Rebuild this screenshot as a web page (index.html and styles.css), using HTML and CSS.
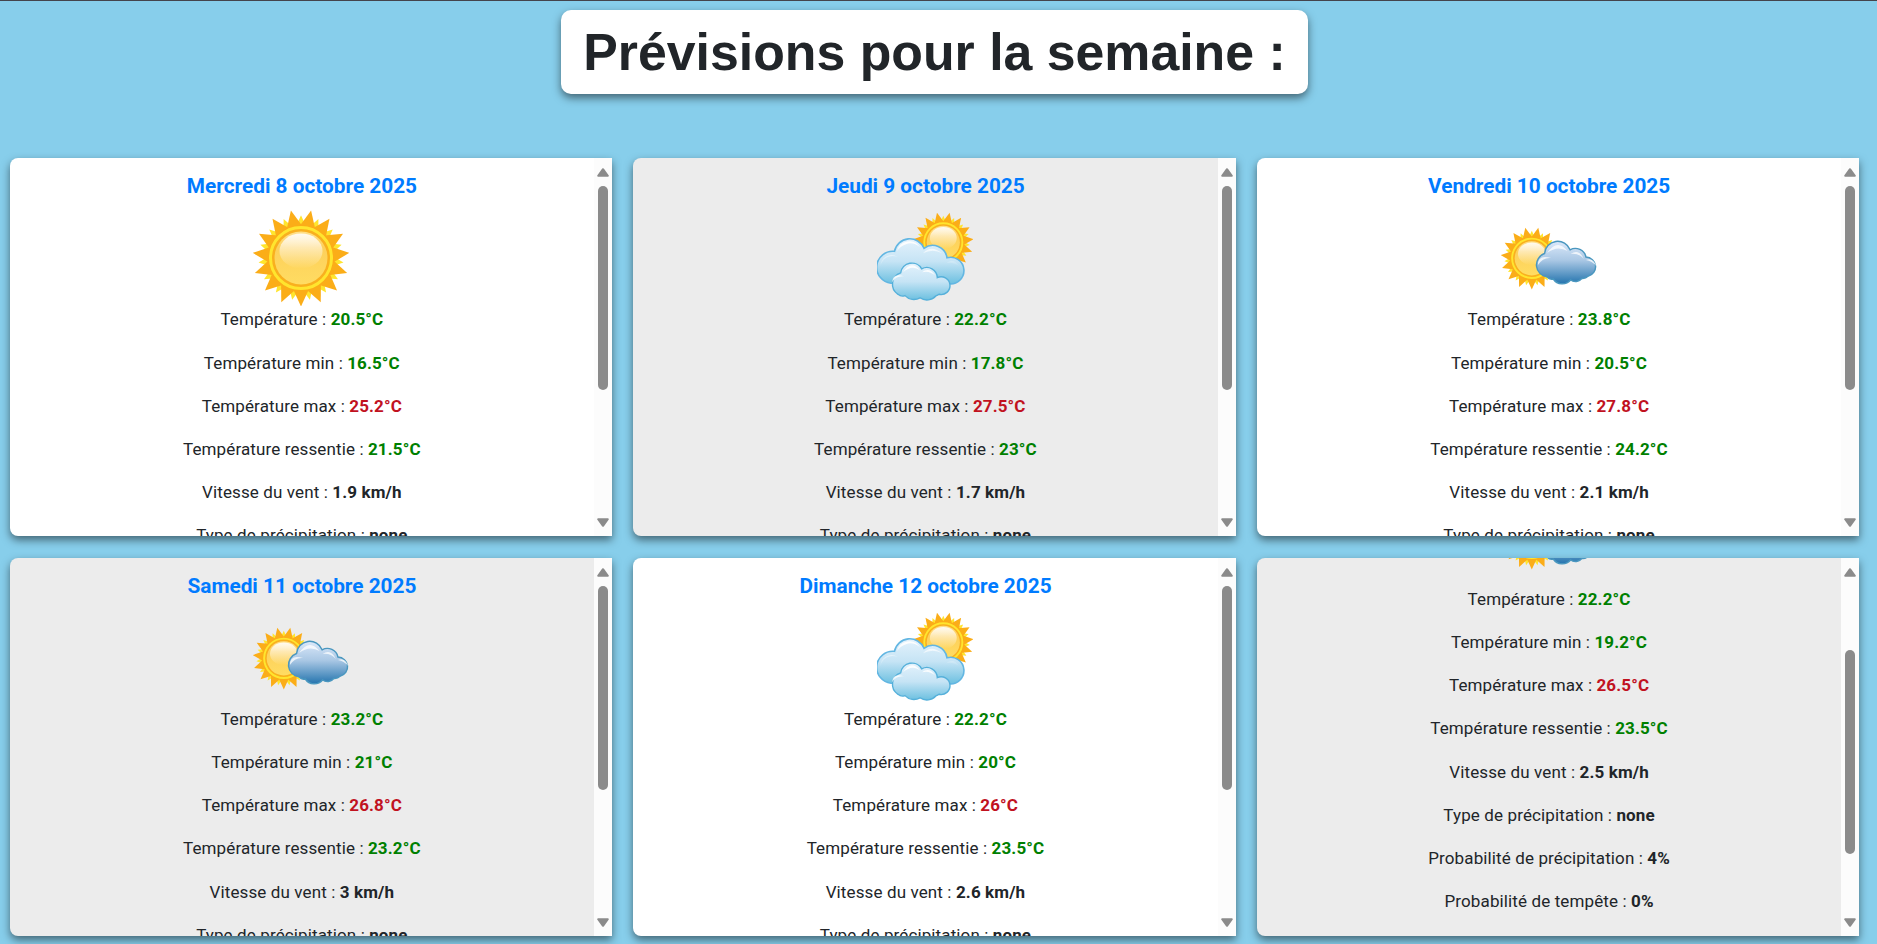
FILE: index.html
```html
<!DOCTYPE html>
<html lang="fr">
<head>
<meta charset="utf-8">
<title>Prévisions pour la semaine</title>
<link rel="stylesheet" href="styles.css">
</head>
<body>
<svg class="defs" aria-hidden="true">
  <defs>
    <linearGradient id="ball" x1="0" y1="0" x2="0" y2="1"><stop offset="0" stop-color="#ffe08a"/><stop offset=".3" stop-color="#fdd05a"/><stop offset="1" stop-color="#ffdc62"/></linearGradient>
    <linearGradient id="shine" x1="0" y1="0" x2="0" y2="1"><stop offset="0" stop-color="#fffaf0"/><stop offset="1" stop-color="#fffaf0" stop-opacity="0"/></linearGradient>
    <linearGradient id="light" x1="0" y1="0" x2="0" y2="1"><stop offset="0" stop-color="#e4f2fc"/><stop offset=".5" stop-color="#c6e4f5"/><stop offset="1" stop-color="#6cc0e0"/></linearGradient>
    <linearGradient id="dark" x1="0" y1="0" x2="0" y2="1"><stop offset="0" stop-color="#dce9fa"/><stop offset=".45" stop-color="#a9c7e4"/><stop offset="1" stop-color="#2474ae"/></linearGradient>
    <linearGradient id="gloss" x1="0" y1="0" x2="0" y2="1"><stop offset="0" stop-color="#fff"/><stop offset="1" stop-color="#fff" stop-opacity="0"/></linearGradient>
    <path id="ray" d="M-8 31L0 48.500L8 31Z"/>
    <g id="rays3"><use href="#ray"/><use href="#ray" transform="rotate(24)"/><use href="#ray" transform="rotate(48)"/></g>
    <g id="rays"><use href="#rays3"/><use href="#rays3" transform="rotate(72)"/><use href="#rays3" transform="rotate(144)"/><use href="#rays3" transform="rotate(216)"/><use href="#rays3" transform="rotate(288)"/></g>
    <g id="sun">
      <use href="#rays" fill="#ffe52e" transform="rotate(12) scale(.88)"/>
      <use href="#rays" fill="#fbad18"/>
      <circle r="32.5" fill="#fbad18"/>
      <circle r="30.5" fill="#f9b01e" stroke="#ffe52e" stroke-width="3"/>
      <circle r="26.5" fill="url(#ball)"/>
      <ellipse cy="-7" rx="21.5" ry="17.5" fill="url(#shine)"/>
    </g>
    <symbol id="sunny" viewBox="0 0 96 96"><use href="#sun" transform="translate(48 48)"/></symbol>
    <symbol id="cloudy" viewBox="0 0 96 96">
      <use href="#sun" transform="translate(66.3 32.3) scale(.625)"/>
      <g transform="translate(0 -.7)">
      <path d="M14 74A16 16 0 0 1 17.5 42A15.5 15.5 0 0 1 47 39A14.5 14.5 0 0 1 70 48.5A13.3 13.3 0 1 1 72 74.500Z" fill="url(#light)" stroke="#62b6e2" stroke-width="1.6"/>
      <path d="M3.500 58A11 11 0 0 1 21 48A12 12 0 0 0 3.500 58ZM20 42A12.500 12.500 0 0 1 43 38Q36 32 29 35Q23 37 20 42ZM46 44Q54 35 65 44Q56 39 46 44ZM69 54Q77 48 82 57Q76 52 69 54Z" fill="url(#gloss)"/>
      <path d="M21 85A12 12 0 0 1 23.700 63.500A11.300 11.300 0 0 1 44.700 59.500A10.500 10.500 0 0 1 60.300 68.300A8.900 8.900 0 1 1 62 85A9 9 0 0 1 59 86.500A12 12 0 0 1 43 88.500A12 12 0 0 1 28 86.300A7 7 0 0 1 21 85Z" fill="url(#light)" stroke="#55b0da" stroke-width="1.400"/>
      <path d="M15 73Q16 63 27 67Q19 66 15 73ZM26 63Q34 50 43 61Q35 55 26 63ZM45 63Q52 57 58 66Q52 61 45 63Z" fill="#fff" opacity=".85"/>
      </g>
    </symbol>
    <symbol id="partly" viewBox="0 0 96 96">
      <use href="#sun" transform="translate(30.800 48.300) scale(.645)"/>
      <g transform="translate(-.9 0) scale(1.022 1)">
      <path d="M46 67A12.200 12.200 0 0 1 43.500 43.500A12.900 12.900 0 0 1 68.500 39.800A10.600 10.600 0 0 1 84 47A9.800 9.800 0 0 1 86 66.300A7 7 0 0 1 80 68.500A8 8 0 0 1 69 70A10.500 10.500 0 0 1 52 69A6 6 0 0 1 46 67Z" fill="url(#dark)" stroke="#4a97bf" stroke-width="1.400"/>
      <path d="M37 55Q37 44 50 48Q42 47 37 55ZM46 43Q56 28 66 41Q56 35 46 43ZM69 44Q77 38 82 49Q77 43 69 44ZM84 50Q91 47 94 56Q90 51 84 50Z" fill="#fff" opacity=".75"/>
      </g>
    </symbol>
    <symbol id="arrow" viewBox="0 0 12 9"><path d="M6 1.200L10.800 7.800H1.200Z" fill="#8b8b8b" stroke="#8b8b8b" stroke-width="2" stroke-linejoin="round"/></symbol>
  </defs>
</svg>
<header class="top"><h1 class="title">Prévisions pour la semaine :</h1></header>
<main class="week">
  <article class="card">
    <div class="body">
      <h2 class="day">Mercredi 8 octobre 2025</h2>
      <svg class="icon"><use href="#sunny"/></svg>
      <p>Température : <b class="ok">20.5°C</b></p>
      <p>Température min : <b class="ok">16.5°C</b></p>
      <p>Température max : <b class="hot">25.2°C</b></p>
      <p>Température ressentie : <b class="ok">21.5°C</b></p>
      <p>Vitesse du vent : <b>1.9 km/h</b></p>
      <p>Type de précipitation : <b>none</b></p>
    </div>
    <div class="bar"><svg class="arrow"><use href="#arrow"/></svg><div class="track"><div class="thumb"></div></div><svg class="arrow down"><use href="#arrow"/></svg></div>
  </article>
  <article class="card alt">
    <div class="body">
      <h2 class="day">Jeudi 9 octobre 2025</h2>
      <svg class="icon"><use href="#cloudy"/></svg>
      <p>Température : <b class="ok">22.2°C</b></p>
      <p>Température min : <b class="ok">17.8°C</b></p>
      <p>Température max : <b class="hot">27.5°C</b></p>
      <p>Température ressentie : <b class="ok">23°C</b></p>
      <p>Vitesse du vent : <b>1.7 km/h</b></p>
      <p>Type de précipitation : <b>none</b></p>
    </div>
    <div class="bar"><svg class="arrow"><use href="#arrow"/></svg><div class="track"><div class="thumb"></div></div><svg class="arrow down"><use href="#arrow"/></svg></div>
  </article>
  <article class="card">
    <div class="body">
      <h2 class="day">Vendredi 10 octobre 2025</h2>
      <svg class="icon"><use href="#partly"/></svg>
      <p>Température : <b class="ok">23.8°C</b></p>
      <p>Température min : <b class="ok">20.5°C</b></p>
      <p>Température max : <b class="hot">27.8°C</b></p>
      <p>Température ressentie : <b class="ok">24.2°C</b></p>
      <p>Vitesse du vent : <b>2.1 km/h</b></p>
      <p>Type de précipitation : <b>none</b></p>
    </div>
    <div class="bar"><svg class="arrow"><use href="#arrow"/></svg><div class="track"><div class="thumb"></div></div><svg class="arrow down"><use href="#arrow"/></svg></div>
  </article>
  <article class="card alt">
    <div class="body">
      <h2 class="day">Samedi 11 octobre 2025</h2>
      <svg class="icon"><use href="#partly"/></svg>
      <p>Température : <b class="ok">23.2°C</b></p>
      <p>Température min : <b class="ok">21°C</b></p>
      <p>Température max : <b class="hot">26.8°C</b></p>
      <p>Température ressentie : <b class="ok">23.2°C</b></p>
      <p>Vitesse du vent : <b>3 km/h</b></p>
      <p>Type de précipitation : <b>none</b></p>
    </div>
    <div class="bar"><svg class="arrow"><use href="#arrow"/></svg><div class="track"><div class="thumb"></div></div><svg class="arrow down"><use href="#arrow"/></svg></div>
  </article>
  <article class="card">
    <div class="body">
      <h2 class="day">Dimanche 12 octobre 2025</h2>
      <svg class="icon"><use href="#cloudy"/></svg>
      <p>Température : <b class="ok">22.2°C</b></p>
      <p>Température min : <b class="ok">20°C</b></p>
      <p>Température max : <b class="hot">26°C</b></p>
      <p>Température ressentie : <b class="ok">23.5°C</b></p>
      <p>Vitesse du vent : <b>2.6 km/h</b></p>
      <p>Type de précipitation : <b>none</b></p>
    </div>
    <div class="bar"><svg class="arrow"><use href="#arrow"/></svg><div class="track"><div class="thumb"></div></div><svg class="arrow down"><use href="#arrow"/></svg></div>
  </article>
  <article class="card alt scrolled">
    <div class="body">
      <svg class="icon"><use href="#partly"/></svg>
      <p>Température : <b class="ok">22.2°C</b></p>
      <p>Température min : <b class="ok">19.2°C</b></p>
      <p>Température max : <b class="hot">26.5°C</b></p>
      <p>Température ressentie : <b class="ok">23.5°C</b></p>
      <p>Vitesse du vent : <b>2.5 km/h</b></p>
      <p>Type de précipitation : <b>none</b></p>
      <p>Probabilité de précipitation : <b>4%</b></p>
      <p>Probabilité de tempête : <b>0%</b></p>
    </div>
    <div class="bar"><svg class="arrow"><use href="#arrow"/></svg><div class="track"><div class="thumb"></div></div><svg class="arrow down"><use href="#arrow"/></svg></div>
  </article>
</main>
</body>
</html>
```
FILE: styles.css
```css
* { box-sizing: border-box; }
body {
  margin: 0;
  height: 944px;
  overflow: hidden;
  background: #87ceeb;
  color: #212529;
  font: 17px/1.6 Roboto, sans-serif;
  border-top: 1px solid #44444c;
}
.defs { display: block; width: 0; height: 0; }
.top { display: flex; justify-content: center; padding: 9px 8px 0 0; height: 157px; }
.title {
  margin: 0;
  width: 747px;
  height: 84px;
  border-radius: 10px;
  background: #fff;
  box-shadow: 0 4px 8px rgba(0, 0, 0, .5);
  font: bold 51.8px/85px "Liberation Sans", Arial, sans-serif;
  text-align: center;
  white-space: nowrap;
}
.week {
  display: grid;
  grid-template-columns: repeat(3, 1fr);
  grid-auto-rows: 378px;
  gap: 21.52px 21px;
  padding: 0 17.6px 0 9.6px;
}
.card {
  display: flex;
  overflow: hidden;
  border-radius: 8px 0 0 8px;
  background: #fff;
  box-shadow: 0 4px 8px rgba(0, 0, 0, .5);
}
.alt { background: #ececec; }
.body { flex: 1; padding: 12.2px .9px 0 0; text-align: center; }
.day { margin: 0 0 6.5px; padding-left: 1px; font-size: 20.8px; line-height: 33.3px; font-weight: 700; color: #007bff; }
.icon { display: block; width: 96px; height: 96px; margin: 0 auto .35px; }
.body p { margin: 0 0 16px; padding-left: .8px; white-space: nowrap; letter-spacing: .12px; }
.ok { color: #008000; }
.hot { color: #c1121f; }
.scrolled .body { padding-top: 0; }
.scrolled .icon { margin-top: -67.95px; }
.bar {
  display: flex;
  flex-direction: column;
  align-items: center;
  width: 18px;
  padding: 10px 0 9px;
  background: #fcfcfc;
}
.arrow { display: block; width: 12px; height: 9px; }
.down { transform: rotate(180deg); }
.track { flex: 1; padding-top: 9px; }
.thumb { width: 10px; height: 204px; border-radius: 5px; background: #8b8b8b; }
.scrolled .track { padding-top: 73px; }
```
